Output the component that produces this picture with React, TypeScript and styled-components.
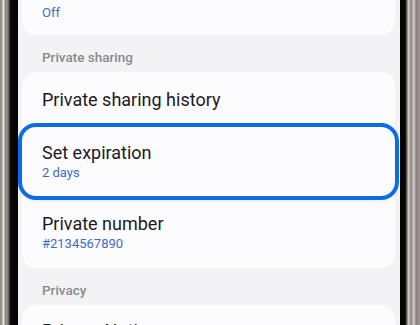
import React from "react";
import { createGlobalStyle, styled } from "styled-components";

const GlobalStyle = createGlobalStyle`
  html, body {
    margin: 0;
    padding: 0;
    background: #000;
  }
  body {
    font-family: Roboto, "Noto Sans", sans-serif;
    -webkit-font-smoothing: antialiased;
  }
`;

type Row = {
  title?: string;
  value?: string;
  focused?: boolean;
};

const sharing: Row[] = [
  { title: "Private sharing history" },
  { title: "Set expiration", value: "2 days", focused: true },
  { title: "Private number", value: "#2134567890" },
];

export default function App() {
  return (
    <>
      <GlobalStyle />
      <Phone>
        <Bezel $side="left" />
        <Screen>
          <Card $clipped>
            <Item $clipped>
              <Value>Off</Value>
            </Item>
          </Card>

          <GroupLabel>Private sharing</GroupLabel>
          <Card>
            {sharing.map((row, index) => (
              <Item key={index} $focused={row.focused}>
                <Title>{row.title}</Title>
                {row.value && <Value>{row.value}</Value>}
              </Item>
            ))}
          </Card>

          <GroupLabel>Privacy</GroupLabel>
          <Card>
            <Item $last>
              <Title>Privacy Notice</Title>
            </Item>
          </Card>
        </Screen>
        <Bezel $side="right" />
      </Phone>
    </>
  );
}

const Phone = styled.div`
  display: flex;
  width: 420px;
  height: 325px;
  overflow: hidden;
`;

const Bezel = styled.div<{ $side: "left" | "right" }>`
  flex-shrink: 0;
  width: ${({ $side }) => ($side === "left" ? "18px" : "20px")};
  background: ${({ $side }) =>
    $side === "left"
      ? `linear-gradient(90deg,
          #8f8784 0px, #a59d99 2px, #e2dcd8 3px, #efe9e5 4px, #8a827f 5px,
          #9b9390 7px, #5a5350 9px, #1c1a19 10px, #050505 11px, #050505 18px)`
      : `linear-gradient(90deg,
          #050505 0px, #050505 5px, #2a2625 6px, #7c7471 7px, #b3aba7 8px,
          #e6e0dc 9px, #8e8683 10px, #a29a97 12px, #d4cdc9 14px, #878080 16px,
          #9d9592 20px)`};
`;

const Screen = styled.div`
  flex: 1;
  display: flex;
  flex-direction: column;
  padding: 0 5px 0 4px;
  background: #f3f3f5;
`;

const Card = styled.div<{ $clipped?: boolean }>`
  display: flex;
  flex-direction: column;
  background: #fcfcfe;
  border-radius: ${({ $clipped }) => ($clipped ? "0 0 24px 24px" : "24px")};
`;

const Item = styled.div<{ $focused?: boolean; $clipped?: boolean; $last?: boolean }>`
  position: relative;
  display: flex;
  flex-direction: column;
  padding: ${({ $clipped, $last }) =>
    $clipped ? "4px 20px 14px" : $last ? "15px 20px 16px" : "16.5px 20px"};
  border-radius: 14px;
  background: #fcfcfe;

  ${({ $focused }) =>
    $focused &&
    `
    padding: 15px 20px;
    outline: 4px solid #0a6de6;
    box-shadow: 0 3px 6px rgba(0, 0, 0, 0.12);
    z-index: 1;
  `}
`;

const Title = styled.div`
  color: #1b1b1d;
  font-size: 18px;
  line-height: 22px;
  font-weight: 400;
`;

const Value = styled.div`
  color: #3c6ec6;
  font-size: 13px;
  line-height: 17px;
`;

const GroupLabel = styled.div`
  padding: 14px 20px 7px;
  color: #8a8a8c;
  font-size: 13.5px;
  font-weight: 500;
  line-height: 16px;
`;
